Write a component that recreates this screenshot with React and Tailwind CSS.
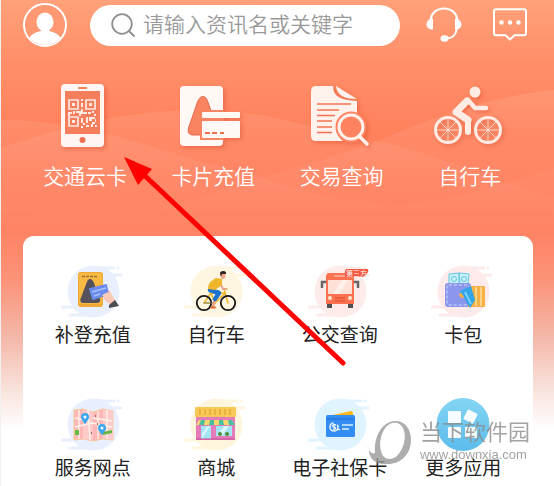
function Avatar() {
  return (
    <svg viewBox="0 0 44 44" className="size-11">
      <defs>
        <clipPath id="avatar-clip">
          <circle cx="22" cy="22" r="20" />
        </clipPath>
      </defs>
      <circle cx="22" cy="22" r="21" fill="#ff9873" stroke="#fff" strokeWidth="2" />
      <g fill="#fff" clipPath="url(#avatar-clip)">
        <ellipse cx="22" cy="19" rx="8.500" ry="9.500" />
        <path d="M18 25h8v3c6 1 11 4 13 9v8H5v-8c2-5 7-8 13-9z" />
      </g>
    </svg>
  );
}

function Headset() {
  return (
    <svg viewBox="0 0 36 36" className="h-9 w-9" fill="none" stroke="#fff">
      <path d="M4.500 14C5 6 10.500 1.500 18 1.500S31 6 31.500 14" strokeWidth="2.200" />
      <path d="M31 21c-1 7-4 10.500-12 10.500" strokeWidth="1.800" />
      <path d="M7 11.500v11C3 22.500 .5 20.500 .5 17.500S3 12 7 11.500zM29 11.500v11c4 0 6.500-2 6.500-5S33 12 29 11.500z" fill="#fff" stroke="none" />
      <ellipse cx="18.500" cy="31.500" rx="4" ry="3.300" fill="#fff" stroke="none" />
    </svg>
  );
}

function Message() {
  return (
    <svg viewBox="0 0 34 34" className="size-[34px]" fill="none" stroke="#fff">
      <path d="M3 1.200h28q2 0 2 2v22q0 2-2 2H21.500L17 31.500l-4.500-4.300H3q-2 0-2-2v-22q0-2 2-2z" strokeWidth="2" strokeLinejoin="round" />
      <g fill="#fff" stroke="none">
        <circle cx="8.500" cy="14.500" r="2.200" />
        <circle cx="17" cy="14.500" r="2.200" />
        <circle cx="25.500" cy="14.500" r="2.200" />
      </g>
    </svg>
  );
}

function PhoneIcon() {
  return (
    <>
      <rect x="12" y="0" width="43" height="63" rx="4" fill="#fff6f3" />
      <rect x="16" y="7" width="35" height="43" fill="#f57f5d" />
      <rect x="29" y="3" width="9" height="2" rx="1" fill="#f57f5d" />
      <circle cx="33.500" cy="56" r="3" fill="#f0704e" />
      <g fill="none" stroke="#ffe9e2" strokeWidth="1.700">
        <path d="M20 16h9v9h-9zM37 16h9v9h-9zM20 33h9v9h-9z" />
      </g>
      <g fill="#ffe9e2">
        <path d="M23 19h3v3h-3zM40 19h3v3h-3zM23 36h3v3h-3z" />
        <path d="M32 15h2v2h-2zM32 19h2v4h-2zM32 25h2v3h4v2h-6v2h-2v-3h-3v-2h5zM19 28h4v2h-2v2h-2zM24 27h2v3h-2zM39 28h3v2h-3zM43 27h2v2h-2zM45 30h2v2h-2zM32 34h2v5h-2zM34 39h2v2h-2zM37 33h2v6h-2zM40 33h6v2h-3v2h-3zM43 38h3v2h-2v3h-2v-3h1zM37 41h3v2h-3zM32 42h2v2h-2zM46 35h1v3h-1zM46 41h2v2h-2z" />
      </g>
    </>
  );
}

function RechargeIcon() {
  return (
    <>
      <rect x="3" y="2" width="43" height="60" rx="4" fill="#fff8f5" />
      <path d="M26 12.500c2 0 3.500 1.500 4.500 4.500L36 32v19H16c-4 0-5.500-2.500-4.500-7l9-26c1.500-4 3.500-5.500 5.500-5.500z" fill="#f88462" stroke="#e8694a" />
      <path d="M23 26h24v30H23z" fill="#f98462" />
      <rect x="25" y="28" width="38" height="6" rx="1" fill="#fff8f5" />
      <rect x="25" y="37" width="38" height="17" rx="1" fill="#fff8f5" />
      <path d="M28 49h5m2 0h5m3 0h4" stroke="#f0704e" strokeWidth="2" />
    </>
  );
}

function QueryIcon() {
  return (
    <>
      <path d="M10 2h17c0 11 8 14 24 15v14a15 15 0 00-14 26H10q-5 0-5-5V7q0-5 5-5z" fill="#fff2ed" />
      <path d="M30 2l21 13c-12 0-20-3-21-13z" fill="#fff2ed" />
      <path d="M11 20h34M11 26h22M11 31.500h18M11 37h15M11 43h15M11 48.500h15" stroke="#f37452" strokeWidth="1.600" />
      <circle cx="45" cy="43" r="12" fill="#ff8260" stroke="#ff8462" strokeWidth="7" />
      <path d="M53 52l8 8" stroke="#fff2ed" strokeWidth="3.500" strokeLinecap="round" />
      <circle cx="45" cy="43" r="12" stroke="#fff2ed" strokeWidth="3" fill="none" />
    </>
  );
}

function RiderIcon() {
  return (
    <g fill="none" stroke="#ffece5" strokeLinecap="round" strokeLinejoin="round">
      <circle cx="14" cy="46" r="12.500" strokeWidth="3" />
      <circle cx="54" cy="46" r="12.500" strokeWidth="3" />
      <path d="M14 34v24M2 46h24M5.500 37.500l17 17M22.500 37.500l-17 17M54 34v24M42 46h24M45.500 37.500l17 17M62.500 37.500l-17 17" strokeWidth=".8" />
      <circle cx="41" cy="8" r="5.500" fill="#ffece5" stroke="none" />
      <path d="M33 17L22 28l12 8" strokeWidth="7" />
      <path d="M34 36v12" strokeWidth="6" />
      <path d="M34 16l7 8h11" strokeWidth="4.500" />
    </g>
  );
}

// soft round backdrop with cloud streaks shared by the small icons
function Blob({ color }) {
  return (
    <g fill={color} stroke={color} strokeLinecap="round" strokeWidth="3">
      <circle cx="32.500" cy="26.500" r="26" stroke="none" />
      <path d="M36 3h17M42 10h18M3 42h22M11 50h24" />
      <path d="M1 42h1M9 50h0M57 3h0" />
    </g>
  );
}

function TapCardIcon() {
  return (
    <>
      <Blob color="#e9effd" />
      <rect x="17" y="7" width="25" height="35" rx="3" fill="#f0a935" />
      <rect x="18" y="8" width="23" height="31" rx="3" fill="#f7b942" />
      <path d="M21 11.500h16" stroke="#9b7330" strokeWidth="1.500" strokeDasharray="3 1" />
      <path d="M29 14c2 0 3 2 4 4l6 16c1 3-1 4-4 4H23c-3 0-4-1-3.500-4l6-16c1-3 2-4 3.500-4z" fill="#55525b" />
      <path d="M43 27l4-3c4 4 5 9 8 12l-5 4c-3-3-7-4-8-8z" fill="#fbc9b5" />
      <path d="M29 23l16-4q1 0 1 1l2 9q0 1-1 1l-15 5q-1 0-1-1l-3-10q0-1 1-1z" fill="#6a8cf0" />
      <path d="M31 27l14-4M33 31l6-2" stroke="#a9c0ff" strokeWidth="1.500" />
      <path d="M41 30l6-3 3 4-5 3z" fill="#fbc9b5" />
      <path d="M54 35l4 6-10 2 0-3z" fill="#4b4b50" />
    </>
  );
}

function CyclistIcon() {
  return (
    <>
      <Blob color="#fef6e1" />
      <g fill="none" strokeLinecap="round" strokeLinejoin="round">
        <path d="M20 38l7-10h14L31 38zM40 24l4 14M26 26l5 12M39 24h4" stroke="#f0b62b" strokeWidth="1.500" />
        <circle cx="20" cy="38" r="7.200" stroke="#171717" strokeWidth="1.800" />
        <circle cx="44" cy="38" r="7.200" stroke="#171717" strokeWidth="1.800" />
        <path d="M20 38h11" stroke="#7b7b7b" />
        <path d="M31 33l-2 9" stroke="#e8a184" strokeWidth="2.500" />
        <path d="M27 42.500h4" stroke="#e0692d" strokeWidth="2" />
        <path d="M26 25l9 3-4 6" stroke="#1d72cf" strokeWidth="4.500" />
        <path d="M35 16l4 8h3" stroke="#e8a184" strokeWidth="1.800" />
      </g>
      <path d="M32 13l6 1 0 6-7 5-7-1c0-6 3-8 8-11z" fill="#f0b62b" />
      <ellipse cx="39" cy="10.500" rx="2.500" ry="3.500" fill="#efa98c" />
      <path d="M36 8c0-2 4-3 6-1v2l-4 0-1 3z" fill="#33211e" />
    </>
  );
}

function BusIcon() {
  return (
    <>
      <Blob color="#fdecea" />
      <path d="M18 17h-4v6M46 17h4v6" fill="none" stroke="#666" strokeWidth="2.500" />
      <path d="M19 37h5v6h-5zM40 37h5v6h-5z" fill="#4e4e55" />
      <path d="M21 8h22q3 0 3 4v27H18V12q0-4 3-4z" fill="#fb7250" />
      <rect x="26" y="10" width="12" height="2" fill="#ffa58d" />
      <rect x="20" y="15" width="24" height="14" rx="1" fill="#ffe1d8" />
      <path d="M34 15h6l-9 14h-6z" fill="#fff0eb" />
      <circle cx="22" cy="33" r="2" fill="#ffe9ce" />
      <circle cx="42" cy="33" r="2" fill="#ffe9ce" />
      <path d="M27 33h10M27 36h10" stroke="#d84b2f" strokeWidth="1.200" />
      <path d="M39 4h20q2 0 1 3l-2 3q-1 2-3 2H37V6q0-2 2-2z" fill="#f25a43" />
      <text x="38" y="11" fontSize="7" fill="#fff">第三方</text>
    </>
  );
}

function WalletIcon() {
  return (
    <>
      <Blob color="#fdeaea" />
      <path d="M18 9l10-1 1 11H18zM28 8l10 1-1 10h-9z" fill="#c6f1fa" stroke="#67c5df" />
      <circle cx="23" cy="14" r="2.500" fill="none" stroke="#67c5df" />
      <circle cx="33" cy="14" r="2.500" fill="none" stroke="#67c5df" />
      <rect x="14" y="18" width="26" height="24" rx="3" fill="#8a97ed" />
      <rect x="16" y="20" width="22" height="20" rx="2" fill="none" stroke="#d5dbff" strokeDasharray="3 2" />
      <path d="M39 21h14q1 0 1 2v18q0 1-1 1H37z" fill="#f6b044" />
      <path d="M45 22v19M50 22v19" stroke="#ffe09a" strokeWidth="1.500" />
      <path d="M29 26l11-5 4 14-5 8z" fill="#30a5e7" />
      <path d="M34 27l6 12" stroke="#7bd0f6" strokeWidth="2" />
      <path d="M28 29c2-2 4 0 5 4-3 0-5-1-5-4z" fill="#f6b044" />
    </>
  );
}

function MapIcon() {
  return (
    <>
      <Blob color="#e9effe" />
      <path d="M13 12l9-1 10 3 10-3 10 2v29l-10-1-10 2-10-2-9 1z" fill="#ffb6b6" stroke="#f4cb91" />
      <path d="M22 11l10 3v29l-10-2zM42 11l10 2v29l-10-1z" fill="#ffcaca" />
      <path d="M14 29l17-4 20 4M18 12v29M27 12l2 30M37 13v28M46 12v29M32 20l19 3M14 20l14 3" fill="none" stroke="#fff5ed" strokeWidth="1.300" />
      <path d="M14 32h4v5h-4zM42 34l9-2v3l-9 2z" fill="#63b946" />
      <path d="M24 26c-3-4-4-5-4-7a3.500 3.500 0 018 0c0 2-1 3-4 7zM41 37c-3-4-4-5-4-7a3.500 3.500 0 018 0c0 2-1 3-4 7z" fill="#3ba7ed" />
      <circle cx="24" cy="19" r="1.500" fill="#fff" />
      <circle cx="41" cy="30" r="1.500" fill="#fff" />
      <path d="M34 17h1v2h-1zM30 34h1v2h-1zM36 25h1v2h-1z" fill="#a86262" />
    </>
  );
}

function ShopIcon() {
  return (
    <>
      <Blob color="#fff5dc" />
      <rect x="12" y="18" width="39" height="24" fill="#e57bb8" />
      <rect x="11" y="9" width="41" height="10" rx="1" fill="#f8c957" />
      <path d="M16 11v6M21 11v6M26 11v6M31 11v6M36 11v6M41 11v6M46 11v6" stroke="#e5a938" strokeWidth="1.500" />
      <path d="M15 22h33l3 5H12z" fill="#f8d76d" />
      <path d="M17 22h4l-1 5h-5zM26 22h4v5h-5zM35 22h4l1 5h-5zM44 22h4l3 5h-6z" fill="#49bfa0" />
      <path d="M17 28h10v13H17zM32 28h16v10H32z" fill="#a4e3f3" />
      <path d="M23 28h3l-8 13v-5zM40 28h5l-7 10h-5z" fill="#d5f6fc" />
      <circle cx="36" cy="36" r="2" fill="#538d37" />
      <circle cx="43" cy="36" r="2" fill="#538d37" />
      <path d="M12 41h39" stroke="#c45094" />
    </>
  );
}

function SocialCardIcon() {
  return (
    <>
      <Blob color="#e0f4ff" />
      <path d="M20 18l23-5q2 0 2 2v4z" fill="#fbb71c" />
      <rect x="18" y="17" width="29" height="22" rx="1.500" fill="#338df3" />
      <path d="M18 21h29" stroke="#1d6fd4" />
      <circle cx="26" cy="29" r="4" fill="none" stroke="#e3f4ff" strokeWidth="1.600" strokeDasharray="18 4" />
      <path d="M28 27c-4-1-4 2-2 2s2 3-1 2M29 31l3 1" fill="none" stroke="#fff" strokeWidth="1.300" />
      <path d="M34 27h11M34 31h7" stroke="#d9efff" strokeWidth="1.600" />
    </>
  );
}

function MoreIcon() {
  return (
    <>
      <defs>
        <linearGradient id="more-fill" x1="0" y1="0" x2="0" y2="1">
          <stop stopColor="#84d5f3" />
          <stop offset="1" stopColor="#5bbcec" />
        </linearGradient>
      </defs>
      <circle cx="32" cy="26.500" r="26.500" fill="url(#more-fill)" />
      <g fill="#f5fcff">
        <rect x="17" y="13" width="13" height="12" rx="1" />
        <rect x="34" y="13" width="11" height="11" rx="1" transform="rotate(27 39.500 18.500)" />
        <rect x="17" y="29" width="13" height="11" rx="1" />
        <rect x="34" y="29" width="12" height="11" rx="1" />
      </g>
    </>
  );
}

const shortcuts = [
  { name: "交通云卡", Icon: PhoneIcon },
  { name: "卡片充值", Icon: RechargeIcon },
  { name: "交易查询", Icon: QueryIcon },
  { name: "自行车", Icon: RiderIcon },
];

const services = [
  { name: "补登充值", Icon: TapCardIcon },
  { name: "自行车", Icon: CyclistIcon },
  { name: "公交查询", Icon: BusIcon },
  { name: "卡包", Icon: WalletIcon },
  { name: "服务网点", Icon: MapIcon },
  { name: "商城", Icon: ShopIcon },
  { name: "电子社保卡", Icon: SocialCardIcon },
  { name: "更多应用", Icon: MoreIcon },
];

function Waves() {
  return (
    <svg viewBox="0 0 554 230" preserveAspectRatio="none" className="absolute inset-x-0 top-0 -z-10 h-[230px] w-full">
      <defs>
        <linearGradient id="wave" gradientUnits="userSpaceOnUse" x1="0" y1="90" x2="0" y2="230">
          <stop stopColor="#fff" stopOpacity=".1" />
          <stop offset="1" stopColor="#fff" stopOpacity="0" />
        </linearGradient>
      </defs>
      <g fill="url(#wave)">
        <path d="M0 120C90 120 150 150 262 178L400 230H0z" />
        <path d="M0 148C70 125 150 100 260 115C310 124 345 138 378 142C430 150 490 182 554 197V230H0z" />
        <path d="M0 203C130 230 190 200 262 178S360 148 378 141S470 98 554 90V230H0z" />
        <path d="M255 176C390 222 430 208 554 168V230H400z" />
      </g>
    </svg>
  );
}

function Arrow() {
  return (
    <svg viewBox="0 0 224 210" className="pointer-events-none absolute left-[122px] top-[156px] h-[210px] w-[224px]">
      <path d="M20 18L220 207" stroke="#fe0000" strokeWidth="5" strokeLinecap="round" />
      <path d="M1 1l28 12-14 16z" fill="#fe0000" />
    </svg>
  );
}

function Watermark() {
  return (
    <div className="pointer-events-none absolute right-[24px] top-[419px] flex items-start gap-2 text-[#8c8c8c] opacity-80">
      <svg viewBox="0 0 43 46" className="h-[46px] w-[43px]">
        <path
          fillRule="evenodd"
          fill="#999"
          d="M25 2C35 1 42 9 42 21C42 35 32 45 19 45C8 46 0 41 0 31C2 34 4 35 6 34C5 18 12 4 25 2zM24 4C15 5 9 20 12 32C14 41 22 42 28 37C35 30 38 17 34 9C32 5 28 3 24 4z"
        />
      </svg>
      <div className="whitespace-nowrap">
        <p className="text-[22px] leading-[28px]">当下软件园</p>
        <p className="text-[13px] leading-4">www.downxia.com</p>
      </div>
    </div>
  );
}

export default function App() {
  return (
    <div className="relative isolate min-h-screen overflow-hidden border-l border-[#f1f1f1] bg-[linear-gradient(to_bottom,#ffa17a_0px,#ff8f69_60px,#ff825d_130px,#ff805e_180px,#ff8465_235px,#fb9379_280px,#f4b6a7_335px,#f8ded7_385px,#ffffff_430px)] font-['Liberation_Sans','Noto_Sans_CJK_SC',sans-serif]">
      <Waves />

      <header className="flex items-center pl-[22px] pr-[27px] pt-[3px]">
        <button type="button" aria-label="我的">
          <Avatar />
        </button>
        <label className="ml-[23px] mr-[26px] flex h-[41px] min-w-0 flex-1 items-center gap-2 rounded-full bg-white pl-[21px] pr-4">
          <svg viewBox="0 0 24 24" className="size-6 shrink-0" fill="none" stroke="#8f8f8f" strokeWidth="1.800" strokeLinecap="round">
            <circle cx="11" cy="11" r="9.800" />
            <path d="M18 18l5 5" />
          </svg>
          <input
            type="text"
            aria-label="搜索"
            placeholder="请输入资讯名或关键字"
            className="w-full min-w-0 bg-transparent text-[21px] font-[350] leading-7 text-gray-700 outline-none placeholder:text-[#999999]"
          />
        </label>
        <button type="button" aria-label="客服" className="mr-[31px]">
          <Headset />
        </button>
        <button type="button" aria-label="消息">
          <Message />
        </button>
      </header>

      <nav className="mt-[37px] grid grid-cols-4 px-5">
        {shortcuts.map(({ name, Icon }) => (
          <button key={name} type="button" className="flex flex-col items-center gap-[15px]">
            <svg viewBox="0 0 72 64" className="h-16 w-[72px] overflow-visible drop-shadow-[2px_2px_2px_rgba(205,65,30,0.4)]">
              <Icon />
            </svg>
            <span className="whitespace-nowrap text-[21px] font-[350] leading-7 text-white">{name}</span>
          </button>
        ))}
      </nav>

      <main className="ml-[22px] mr-[21px] mt-[45px] grid grid-cols-4 gap-y-[50px] rounded-t-[11px] bg-white px-2 pb-[5px] pt-[29px]">
        {services.map(({ name, Icon }) => (
          <button key={name} type="button" className="flex flex-col items-center gap-[6px]">
            <svg viewBox="0 0 64 53" className="h-[53px] w-16">
              <Icon />
            </svg>
            <span className="whitespace-nowrap text-[19px] leading-6 text-[#222]">{name}</span>
          </button>
        ))}
      </main>

      <Arrow />
      <Watermark />
    </div>
  );
}
